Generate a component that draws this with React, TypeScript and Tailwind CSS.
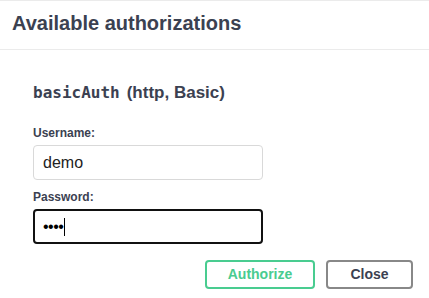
export default function App() {
  const sans = { fontFamily: '"Liberation Sans", Arial, sans-serif' };

  return (
    <div className="w-[429px] h-[298px] bg-white text-[#3b4151] overflow-hidden" style={sans}>
      {/* modal header */}
      <div className="h-[50px] border-t border-b border-[#ebebeb] pt-[10px] px-[12px]">
        <h3 className="text-[20px] leading-[24px] font-bold">Available authorizations</h3>
      </div>

      {/* auth container */}
      <div className="pl-[33px] pr-[16px] pt-[31px]">
        <h4 className="flex items-baseline text-[17px] leading-[24px] font-bold whitespace-nowrap">
          <code className="text-[16px] font-bold" style={{ fontFamily: '"DejaVu Sans Mono", monospace' }}>
            basicAuth
          </code>
          <span className="ml-[7px]">(http, Basic)</span>
        </h4>

        <label className="block mt-[20px] text-[12px] leading-[16px] font-bold">Username:</label>
        <div className="mt-[4px] w-[230px] h-[35px] border border-[#d9d9d9] rounded-[4px] px-[9px] flex items-center text-[16px] text-[#222]">
          demo
        </div>

        <label className="block mt-[9px] text-[12px] leading-[16px] font-bold">Password:</label>
        <div className="mt-[4px] w-[230px] h-[35px] border-2 border-[#111] rounded-[4px] px-[8px] flex items-center text-[16px] text-black">
          <span className="tracking-[-0.5px]">••••</span>
          <span className="w-px h-[18px] bg-black ml-[1px]" />
        </div>

        <div className="mt-[16px] flex justify-end gap-[11px]">
          <button className="h-[29px] w-[110px] border-2 border-[#49cc90] rounded-[4px] text-[14px] font-bold text-[#49cc90]">
            Authorize
          </button>
          <button className="h-[29px] w-[87px] border-2 border-[#888] rounded-[4px] text-[14px] font-bold text-[#3b4151]">
            Close
          </button>
        </div>
      </div>
    </div>
  );
}
